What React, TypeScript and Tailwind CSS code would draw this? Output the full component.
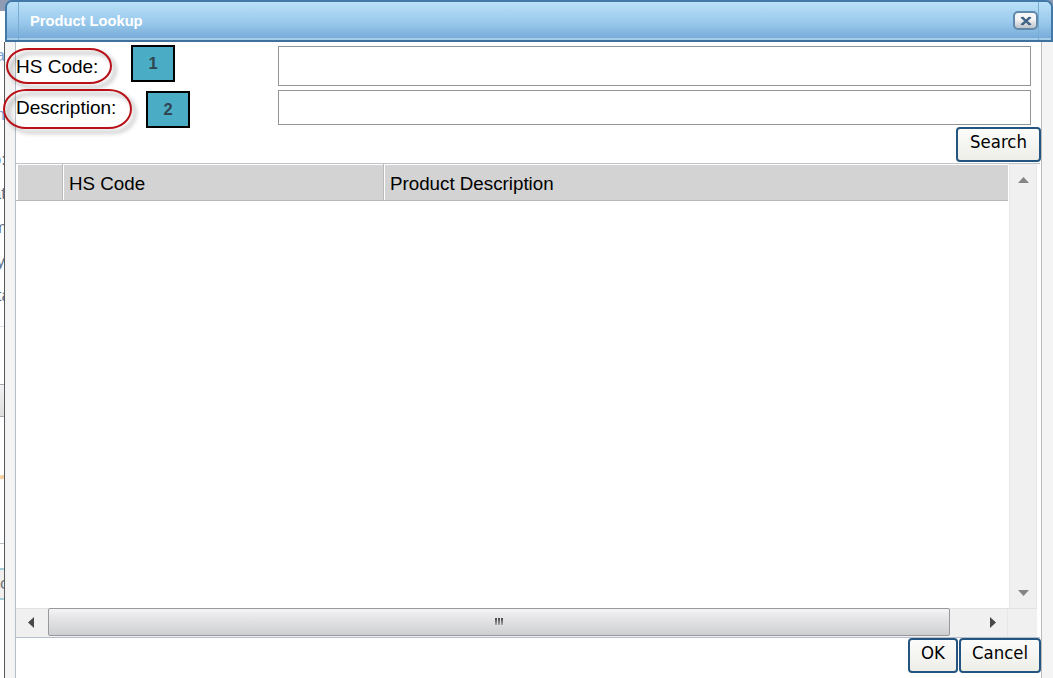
import { clsx } from 'clsx'
import type { ReactNode } from 'react'

const COLUMNS = [
  { id: 'select', label: '', width: 'w-[46px]' },
  { id: 'code',   label: 'HS Code', width: 'w-[321px]' },
  { id: 'desc',   label: 'Product Description', width: 'flex-1' },
]

// Ends of the form labels that show left of the dialog
const PAGE_LABELS = [
  { text: 'a', className: 'mt-[31px] h-[27px] text-[#7da2d6]', offset: '-mr-px' },
  { text: 'n', className: 'mt-[33px] h-[26px] text-[#7da2d6]', offset: '-mr-px' },
  { text: 'o:', className: 'mt-[19px] h-[26px] text-[#63728a]', offset: '-mr-[2px]' },
  { text: 'at', className: 'mt-[8px] h-[26px] text-[#63728a]', offset: '-mr-[2px]' },
  { text: 'm', className: 'mt-[8px] h-[26px] text-[#63728a]', offset: '-mr-[3px]' },
  { text: 'y', className: 'mt-[8px] h-[26px] text-[#63728a]', offset: '-mr-px' },
  { text: 'ta', className: 'mt-[8px] h-[26px] text-[#63728a]', offset: '-mr-[7px]' },
]

function PageEdge() {
  return (
    <div className="flex h-full w-[4px] shrink-0 flex-col overflow-hidden bg-white">
      <div className="h-[11px] shrink-0 bg-[#8f9cb3]" />
      {PAGE_LABELS.map(({ text, className, offset }) => (
        <div key={text} className={clsx('flex shrink-0 items-center justify-end text-[17px]', className)}>
          <span className={offset}>{text}</span>
        </div>
      ))}
      <div className="mt-[17px] h-px shrink-0 bg-[#dde0e5]" />
      <div className="mt-[57px] h-[33px] shrink-0 border-y border-[#a5a9ad] bg-linear-to-b from-[#f2f2f2] to-[#dedede]" />
      <div className="mt-[58px] h-[4px] w-[6px] shrink-0 -rotate-12 bg-[#f4cf9f]" />
      <div className="mt-[64px] h-px shrink-0 bg-[#b9bfc7]" />
      <div className="mt-[24px] flex h-[32px] shrink-0 items-center border-y-2 border-[#a3ced9] bg-[#f0f0f0] text-[17px] text-[#777]">
        <span>c</span>
      </div>
    </div>
  )
}

function TitleBar() {
  return (
    <div className="shrink-0 bg-linear-to-b from-[#8f9cb3] from-[11px] to-white to-[11px] pl-px">
      <div className="flex h-[42px] rounded-t-[7px] border-2 border-[#4379a8] border-b-[#3e719f] bg-linear-to-b from-[#b9e0f8] via-[#9ccbed] to-[#74a9d6] shadow-[inset_0_-2px_0_#a5cdea]">
        <div className="w-[12px] border-r border-[#78acd3]" />
        <div className="flex flex-1 items-start justify-between pl-[11px]">
          <h1 className="mt-[10px] text-[14.7px] leading-[18px] font-bold text-white">Product Lookup</h1>
          <button className="mt-[9px] flex h-[19px] w-[25px] items-center justify-center rounded-[5px] border-2 border-[#6088aa] bg-linear-to-b from-[#f6f6f6] from-40% to-[#bec3c9]">
            <svg width="12" height="10" viewBox="0 0 12 10" fill="none" stroke="#426486" strokeWidth="2.6">
              <path d="M2 1.4 10 8.6M10 1.4 2 8.6" />
              <path d="M.8 1.6h3M8.2 1.6h3M.8 8.4h3M8.2 8.4h3" strokeWidth="1.4" />
            </svg>
          </button>
        </div>
        <div className="w-[13px] border-l border-[#78acd3]" />
      </div>
    </div>
  )
}

function Marker({ children, className }: { children: ReactNode; className: string }) {
  return (
    <span className={clsx('absolute flex h-[37px] w-[44px] items-center justify-center border-2 border-black bg-[#4bacc6] text-[16.5px] font-bold text-[#2f4550]', className)}>
      {children}
    </span>
  )
}

function Ring({ className }: { className: string }) {
  return (
    <span className={clsx('absolute border-2 border-[#b81118] drop-shadow-[4px_4px_2px_rgba(0,0,0,0.35)]', className)} />
  )
}

function DialogButton({ label, className }: { label: string; className: string }) {
  return (
    <button
      className={clsx(
        'flex shrink-0 justify-center rounded-[4px] border-2 border-[#245580] bg-linear-to-b from-[#fcfcfb] to-[#edeee8] font-["DejaVu_Sans_Condensed","DejaVu_Sans",sans-serif] text-[18.4px] leading-[26px] text-black [font-stretch:condensed]',
        className,
      )}
    >
      {label}
    </button>
  )
}

function ProductGrid() {
  return (
    <div className="flex h-[475px] w-[1024px] flex-col border-y border-b-[#b5bfcb] border-t-[#bfc4cb]">
      <div className="flex h-[444px]">
        <div className="w-[992px]">
          <div className="flex h-[37px] border-b border-[#b8b8b8] bg-[#d3d3d3] pl-px shadow-[inset_2px_1px_0_white]">
            {COLUMNS.map(({ id, label, width }) => (
              <div
                key={id}
                className={clsx(
                  'pt-[9px] text-[18.75px] leading-[21px] text-black',
                  width,
                  id !== 'select' && 'border-l border-white pl-[5px]',
                  id !== 'desc' && 'border-r border-r-[#bababa]',
                )}
              >
                {label}
              </div>
            ))}
          </div>
        </div>
        <div className="ml-px flex w-[28px] flex-col items-center justify-between border-x border-[#e8e8e8] bg-[#f0f0f0] pt-[13px] pb-[12px]">
          <svg width="11" height="6" viewBox="0 0 11 6"><path d="M5.5 0 11 6H0z" fill="#858585" /></svg>
          <svg width="11" height="6" viewBox="0 0 11 6"><path d="M0 0h11L5.5 6z" fill="#858585" /></svg>
        </div>
      </div>
      <div className="flex h-[29px] w-[1021px] border-t border-[#e2e2e2] bg-[#f0f0f0]">
        <div className="flex w-[32px] justify-center pt-[8px] pr-[2px]">
          <svg width="6" height="11" viewBox="0 0 6 11"><path d="M6 0v11L0 5.5z" fill="#484848" /></svg>
        </div>
        <div className="-mt-px flex h-[28px] w-[902px] justify-center rounded-[2px] border border-[#98989d] bg-linear-to-b from-[#f4f4f4] from-0% via-[#e9e9eb] via-25% to-[#cecfd1] pt-[9px]">
          <div className="flex h-[8px] gap-px">
            {[0, 1, 2].map((grip) => (
              <div key={grip} className="h-[7px] w-[2px] bg-linear-to-b from-[#444] to-[#aaa]" />
            ))}
          </div>
        </div>
        <div className="flex h-full flex-1 border-r border-[#e7e7e7] pt-[8px] pl-[40px]">
          <svg width="6" height="11" viewBox="0 0 6 11"><path d="M0 0v11l6-5.5z" fill="#484848" /></svg>
        </div>
        <div className="w-[29px]" />
      </div>
    </div>
  )
}

export default function App() {
  return (
    <main className='relative flex h-[678px] w-[1053px] overflow-hidden bg-white font-["Liberation_Sans",Arial,sans-serif]'>
      <PageEdge />
      <section className="flex flex-1 flex-col">
        <TitleBar />
        <div className="flex flex-1 border-l border-[#56595c] bg-[#f4f4f4]">
          <div className="ml-[10px] flex w-[1027px] flex-col border-x border-l-[#b3bec8] border-r-[#bbb] bg-white">
            {/* Search fields */}
            <div className="mt-[4px] flex h-[40px] justify-between pr-[10px]">
              <label className="mt-[10px] text-[19px] leading-[21px] text-black">HS Code:</label>
              <input className="h-[40px] w-[753px] border border-[#949494] bg-white px-2 outline-none" />
            </div>
            <div className="mt-[4px] flex h-[35px] justify-between pr-[10px]">
              <label className="mt-[7px] text-[19px] leading-[21px] text-black">Description:</label>
              <input className="h-[35px] w-[753px] border border-[#949494] bg-white px-2 outline-none" />
            </div>
            <div className="mt-[2px] mb-px flex justify-end">
              <DialogButton label="Search" className="h-[35px] w-[85px]" />
            </div>

            <ProductGrid />

            {/* Actions */}
            <div className="flex justify-end gap-px">
              <DialogButton label="OK" className="h-[35px] w-[50px]" />
              <DialogButton label="Cancel" className="h-[35px] w-[82px]" />
            </div>
          </div>
        </div>
      </section>

      {/* Annotations */}
      <Ring className="top-[48px] left-[6px] h-[36px] w-[106px] rounded-[22px/18px]" />
      <Ring className="top-[89px] left-[3px] h-[40px] w-[129px] rounded-[23px/20px]" />
      <Marker className="top-[45px] left-[131px]">1</Marker>
      <Marker className="top-[91px] left-[146px]">2</Marker>
    </main>
  )
}
